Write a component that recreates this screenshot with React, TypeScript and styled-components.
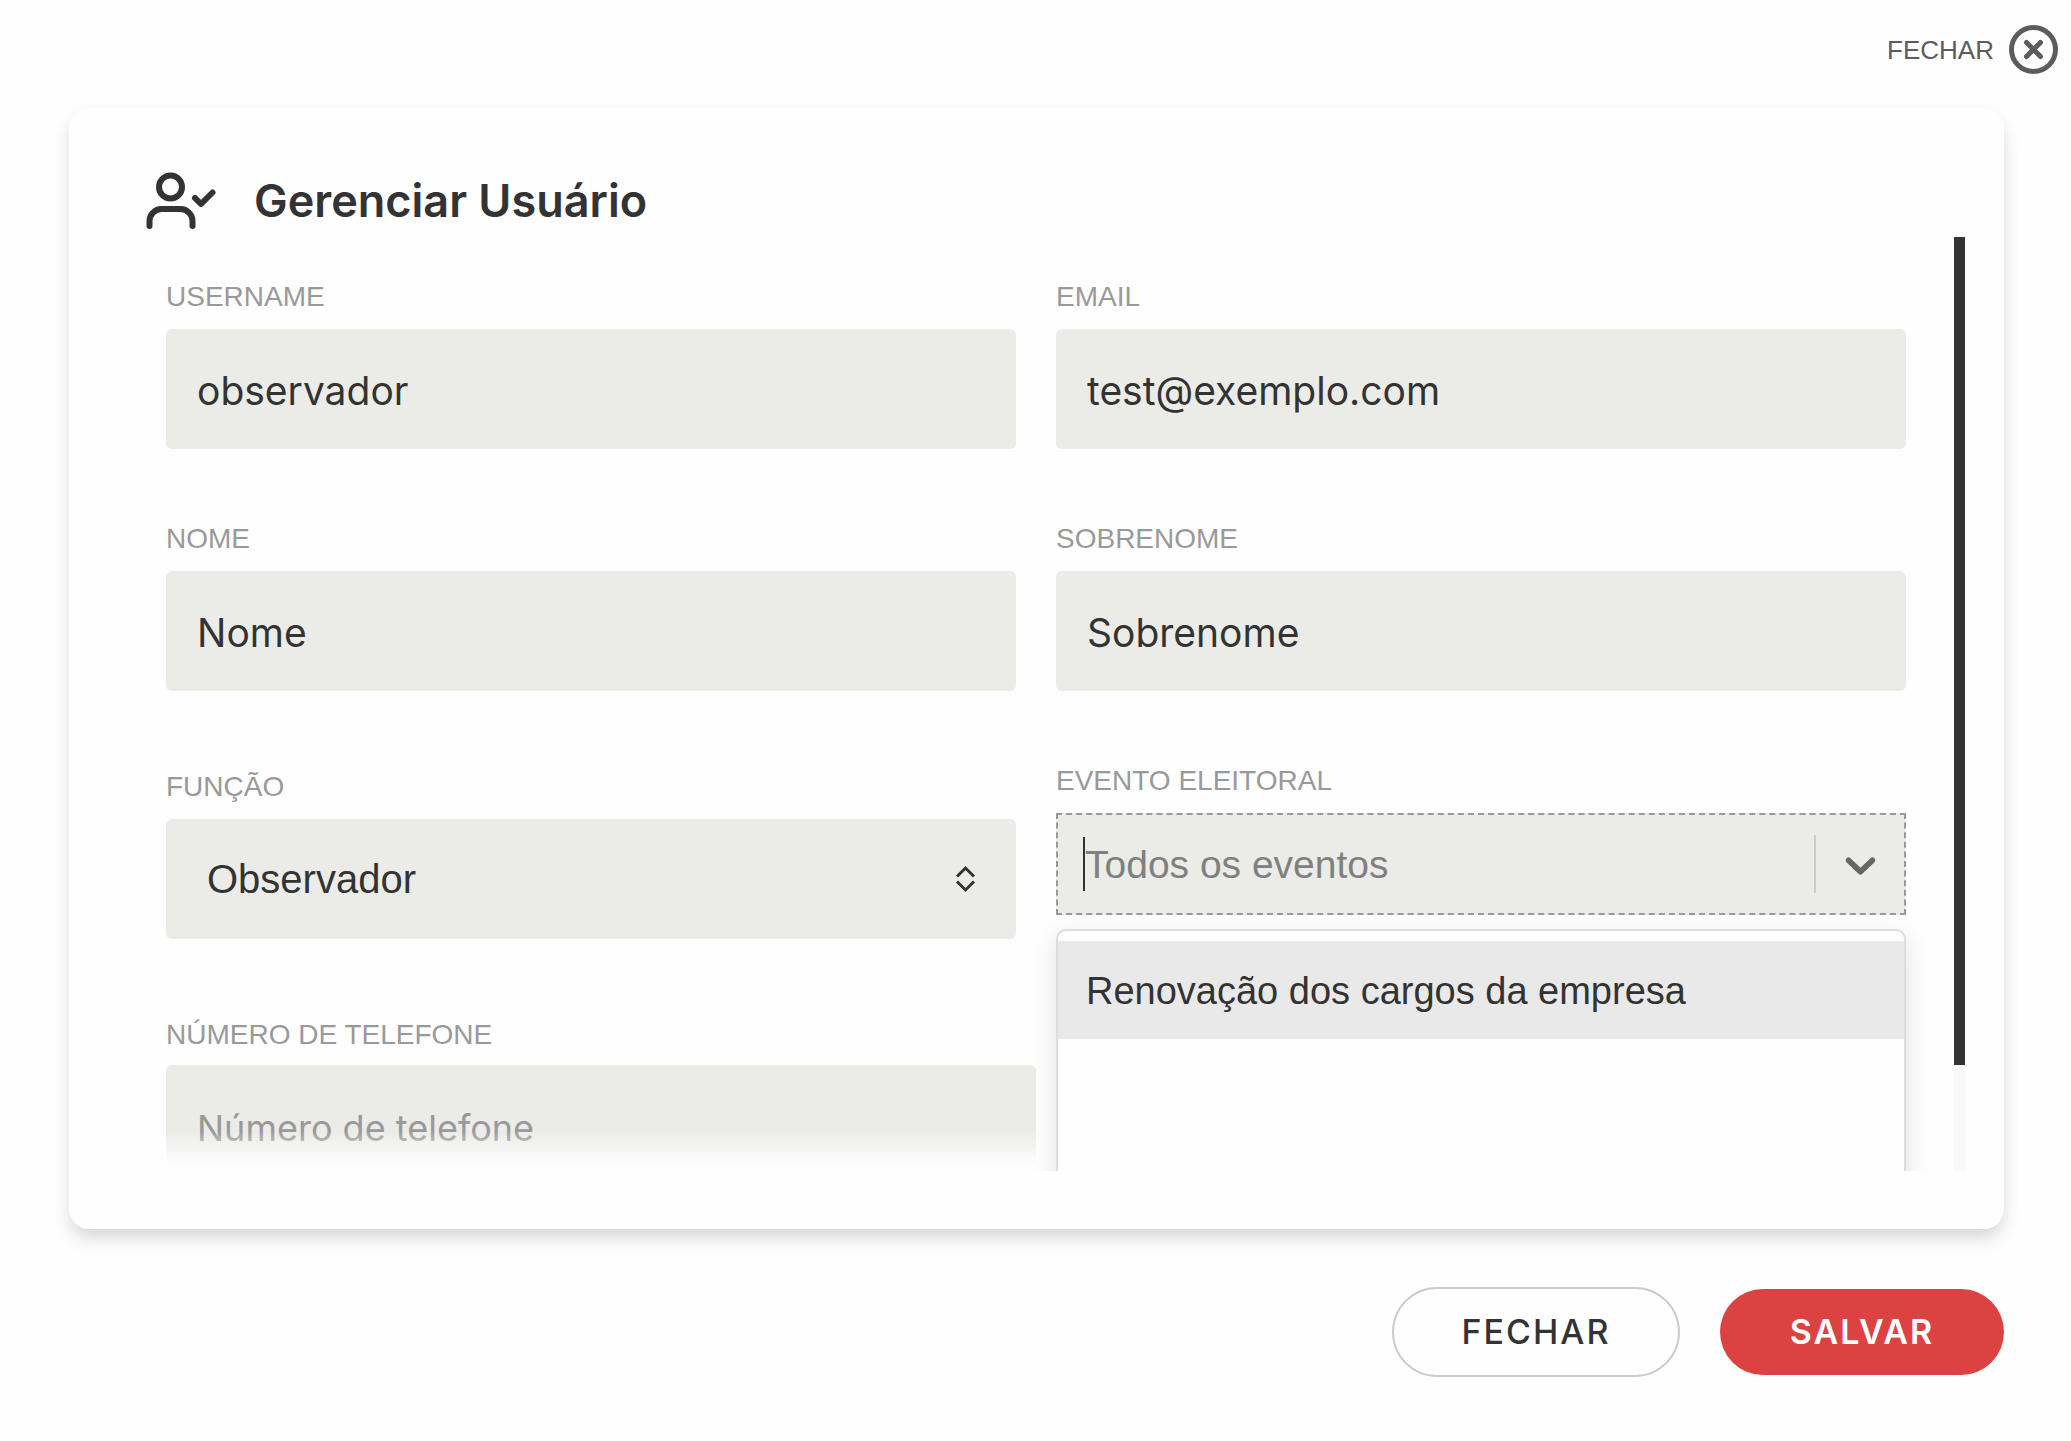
import React from "react";
import styled, { createGlobalStyle } from "styled-components";

const sans = `"Liberation Sans", Arial, sans-serif`;
const wide = `Inter, "Liberation Sans", sans-serif`;
const ink = "#333333";
const muted = "#999999";
const fieldBg = "#ebece7";
const page = "#fefefe";

const GlobalStyle = createGlobalStyle`
  *, *::before, *::after { box-sizing: border-box; }
  body { margin: 0; background: ${page}; color: ${ink}; font-family: ${sans}; }
  button, input, select { font: inherit; color: inherit; }
`;

const TopBar = styled.div`
  display: flex;
  justify-content: flex-end;
  padding: 25px 13px 34px;
`;

const CloseButton = styled.button`
  display: flex;
  align-items: center;
  gap: 15px;
  padding: 0;
  border: 0;
  background: none;
  color: #5c5c5c;
  font-size: 26px;
  line-height: 48px;
  cursor: pointer;
`;

const Dialog = styled.main`
  padding: 0 67px 0 69px;
`;

const Card = styled.section`
  padding: 63px 39px 58px 77px;
  border-radius: 20px;
  background: ${page};
  box-shadow: 0 10px 18px -2px rgba(0, 0, 0, 0.17);
`;

const Header = styled.header`
  display: flex;
  align-items: center;
  gap: 36px;
  margin-bottom: 6px;
`;

const Title = styled.h1`
  margin: 0;
  font-family: ${wide};
  font-size: 45px;
  font-weight: 600;
  line-height: 60px;
`;

const Body = styled.div`
  display: flex;
  height: calc(100vh - 507px);
`;

const ScrollArea = styled.div`
  position: relative;
  flex: 1;
  min-width: 0;
  padding: 42px 48px 0 20px;
  overflow: hidden;
`;

const Columns = styled.form`
  display: grid;
  grid-template-columns: 1fr 1fr;
  gap: 40px;
`;

const Column = styled.div`
  display: flex;
  flex-direction: column;
  gap: 72px;
  min-width: 0;
`;

const Field = styled.div<{ $inset?: boolean; $overhang?: boolean }>`
  position: relative;
  display: flex;
  flex-direction: column;
  gap: ${(p) => (p.$overhang ? 12 : 14)}px;
  margin: ${(p) => (p.$inset ? "6px 0" : "0")};
  margin-right: ${(p) => (p.$overhang ? "-20px" : "0")};
`;

const Label = styled.label`
  color: ${muted};
  font-size: 28px;
  line-height: 36px;
`;

const TextInput = styled.input`
  width: 100%;
  height: 120px;
  padding: 3px 31px 0;
  border: 0;
  border-radius: 6px;
  outline: 0;
  background: ${fieldBg};
  font-family: ${wide};
  font-size: 39px;

  &::placeholder {
    color: ${muted};
    font-size: 36px;
    opacity: 1;
  }
`;

const SelectBox = styled.div`
  display: grid;
  align-items: center;

  > * {
    grid-area: 1 / 1;
  }

  > svg {
    justify-self: end;
    margin-right: 40px;
    pointer-events: none;
  }
`;

const Select = styled.select`
  appearance: none;
  width: 100%;
  height: 120px;
  padding: 0 80px 0 41px;
  border: 0;
  border-radius: 6px;
  outline: 0;
  background: ${fieldBg};
  font-size: 40px;
`;

const Combo = styled.div`
  display: flex;
  align-items: center;
  height: 102px;
  padding: 0 18px 0 25px;
  border: 2px dashed #999999;
  background: ${fieldBg};
`;

const Caret = styled.span`
  width: 2px;
  height: 54px;
  background: ${ink};
`;

const ComboInput = styled.input`
  flex: 1;
  min-width: 0;
  height: 54px;
  padding: 2px 0 0;
  border: 0;
  outline: 0;
  background: none;
  font-size: 39px;

  &::placeholder {
    color: #808080;
    opacity: 1;
  }
`;

const Divider = styled.span`
  width: 2px;
  height: 58px;
  background: #cccccc;
`;

const Toggle = styled.button`
  display: flex;
  padding: 0 0 0 19px;
  border: 0;
  background: none;
  color: #666666;
`;

const Menu = styled.ul`
  position: absolute;
  z-index: 2;
  top: calc(100% + 14px);
  left: 0;
  right: 0;
  height: 600px;
  margin: 0;
  padding: 10px 0;
  border: 2px solid #dddddd;
  border-radius: 10px;
  background: ${page};
  box-shadow: 0 8px 24px rgba(0, 0, 0, 0.12);
  list-style: none;
`;

const Option = styled.li`
  padding: 2px 28px 0;
  background: #e9e9e9;
  font-size: 38px;
  line-height: 96px;
`;

const Fade = styled.div`
  position: absolute;
  z-index: 1;
  right: 0;
  bottom: 0;
  left: 0;
  height: 40px;
  background: linear-gradient(rgba(254, 254, 254, 0), ${page} 85%);
`;

const Track = styled.div`
  width: 11px;
  background: #f9f9f9;
`;

const Thumb = styled.div`
  height: 828px;
  max-height: 89%;
  background: ${ink};
`;

const Footer = styled.footer`
  display: flex;
  align-items: center;
  justify-content: flex-end;
  gap: 40px;
  padding: 58px 0 64px;
`;

const Action = styled.button<{ $primary?: boolean }>`
  min-width: ${(p) => (p.$primary ? 284 : 288)}px;
  height: ${(p) => (p.$primary ? 86 : 90)}px;
  padding: 0 40px 2px;
  border: ${(p) => (p.$primary ? "0" : "2px solid #cccccc")};
  border-radius: 45px;
  background: ${(p) => (p.$primary ? "#db4241" : page)};
  color: ${(p) => (p.$primary ? "#ffffff" : ink)};
  font-family: ${wide};
  font-size: 34px;
  font-weight: ${(p) => (p.$primary ? 600 : 500)};
  letter-spacing: 2px;
  cursor: pointer;
`;

const CloseIcon = () => (
  <svg width="49" height="49" viewBox="0 0 49 49" fill="none" stroke="currentColor" strokeWidth="5" aria-hidden="true">
    <circle cx="24.5" cy="24.5" r="22" />
    <path d="M17.5 17.5l14 14M31.5 17.5l-14 14" strokeLinecap="round" />
  </svg>
);

const UserCheckIcon = () => (
  <svg
    width="72"
    height="60"
    viewBox="1 0 72 60"
    fill="none"
    stroke="currentColor"
    strokeWidth="6"
    strokeLinecap="round"
    strokeLinejoin="round"
    aria-hidden="true"
  >
    <circle cx="25.500" cy="16" r="11.500" />
    <path d="M4.500 55v-5a12 12 0 0 1 12-12h19a12 12 0 0 1 12 12v5" />
    <path d="M50 27l6 6 11.500-11.500" />
  </svg>
);

const SortIcon = () => (
  <svg width="21" height="28" viewBox="0 0 21 28" fill="none" stroke="currentColor" strokeWidth="3" aria-hidden="true">
    <path d="M2 11.500l8.500-8.500 8.500 8.500M2 16.500l8.500 8.500 8.500-8.500" />
  </svg>
);

const ChevronIcon = () => (
  <svg width="51" height="51" viewBox="0 0 20 20" fill="currentColor" aria-hidden="true">
    <path d="M4.516 7.548c0.436-0.446 1.043-0.481 1.576 0l3.908 3.747 3.908-3.747c0.533-0.481 1.141-0.446 1.574 0 0.436 0.445 0.408 1.197 0 1.615-0.406 0.418-4.695 4.502-4.695 4.502-0.217 0.223-0.502 0.335-0.787 0.335s-0.57-0.112-0.789-0.335c0 0-4.287-4.084-4.695-4.502s-0.436-1.170 0-1.615z" />
  </svg>
);

type TextFieldProps = {
  id: string;
  label: string;
  type?: string;
  value?: string;
  placeholder?: string;
  overhang?: boolean;
};

const TextField = ({ id, label, type = "text", value, placeholder, overhang }: TextFieldProps) => (
  <Field $overhang={overhang}>
    <Label htmlFor={id}>{label}</Label>
    <TextInput id={id} type={type} defaultValue={value} placeholder={placeholder} />
  </Field>
);

export default function App() {
  return (
    <>
      <GlobalStyle />
      <TopBar>
        <CloseButton type="button">
          FECHAR
          <CloseIcon />
        </CloseButton>
      </TopBar>
      <Dialog>
        <Card>
          <Header>
            <UserCheckIcon />
            <Title>Gerenciar Usuário</Title>
          </Header>
          <Body>
            <ScrollArea>
              <Columns>
                <Column>
                  <TextField id="username" label="USERNAME" value="observador" />
                  <TextField id="nome" label="NOME" value="Nome" />
                  <Field $inset>
                    <Label htmlFor="funcao">FUNÇÃO</Label>
                    <SelectBox>
                      <Select id="funcao" defaultValue="observador">
                        <option value="observador">Observador</option>
                      </Select>
                      <SortIcon />
                    </SelectBox>
                  </Field>
                  <TextField
                    id="telefone"
                    label="NÚMERO DE TELEFONE"
                    type="tel"
                    placeholder="Número de telefone"
                    overhang
                  />
                </Column>
                <Column>
                  <TextField id="email" label="EMAIL" type="email" value="test@exemplo.com" />
                  <TextField id="sobrenome" label="SOBRENOME" value="Sobrenome" />
                  <Field>
                    <Label htmlFor="evento">EVENTO ELEITORAL</Label>
                    <Combo>
                      <Caret />
                      <ComboInput
                        id="evento"
                        role="combobox"
                        aria-expanded="true"
                        aria-controls="evento-lista"
                        placeholder="Todos os eventos"
                      />
                      <Divider />
                      <Toggle type="button" aria-label="Abrir lista">
                        <ChevronIcon />
                      </Toggle>
                    </Combo>
                    <Menu id="evento-lista" role="listbox">
                      <Option role="option" aria-selected="true">
                        Renovação dos cargos da empresa
                      </Option>
                    </Menu>
                  </Field>
                </Column>
              </Columns>
              <Fade />
            </ScrollArea>
            <Track>
              <Thumb />
            </Track>
          </Body>
        </Card>
        <Footer>
          <Action type="button">FECHAR</Action>
          <Action type="button" $primary>
            SALVAR
          </Action>
        </Footer>
      </Dialog>
    </>
  );
}
